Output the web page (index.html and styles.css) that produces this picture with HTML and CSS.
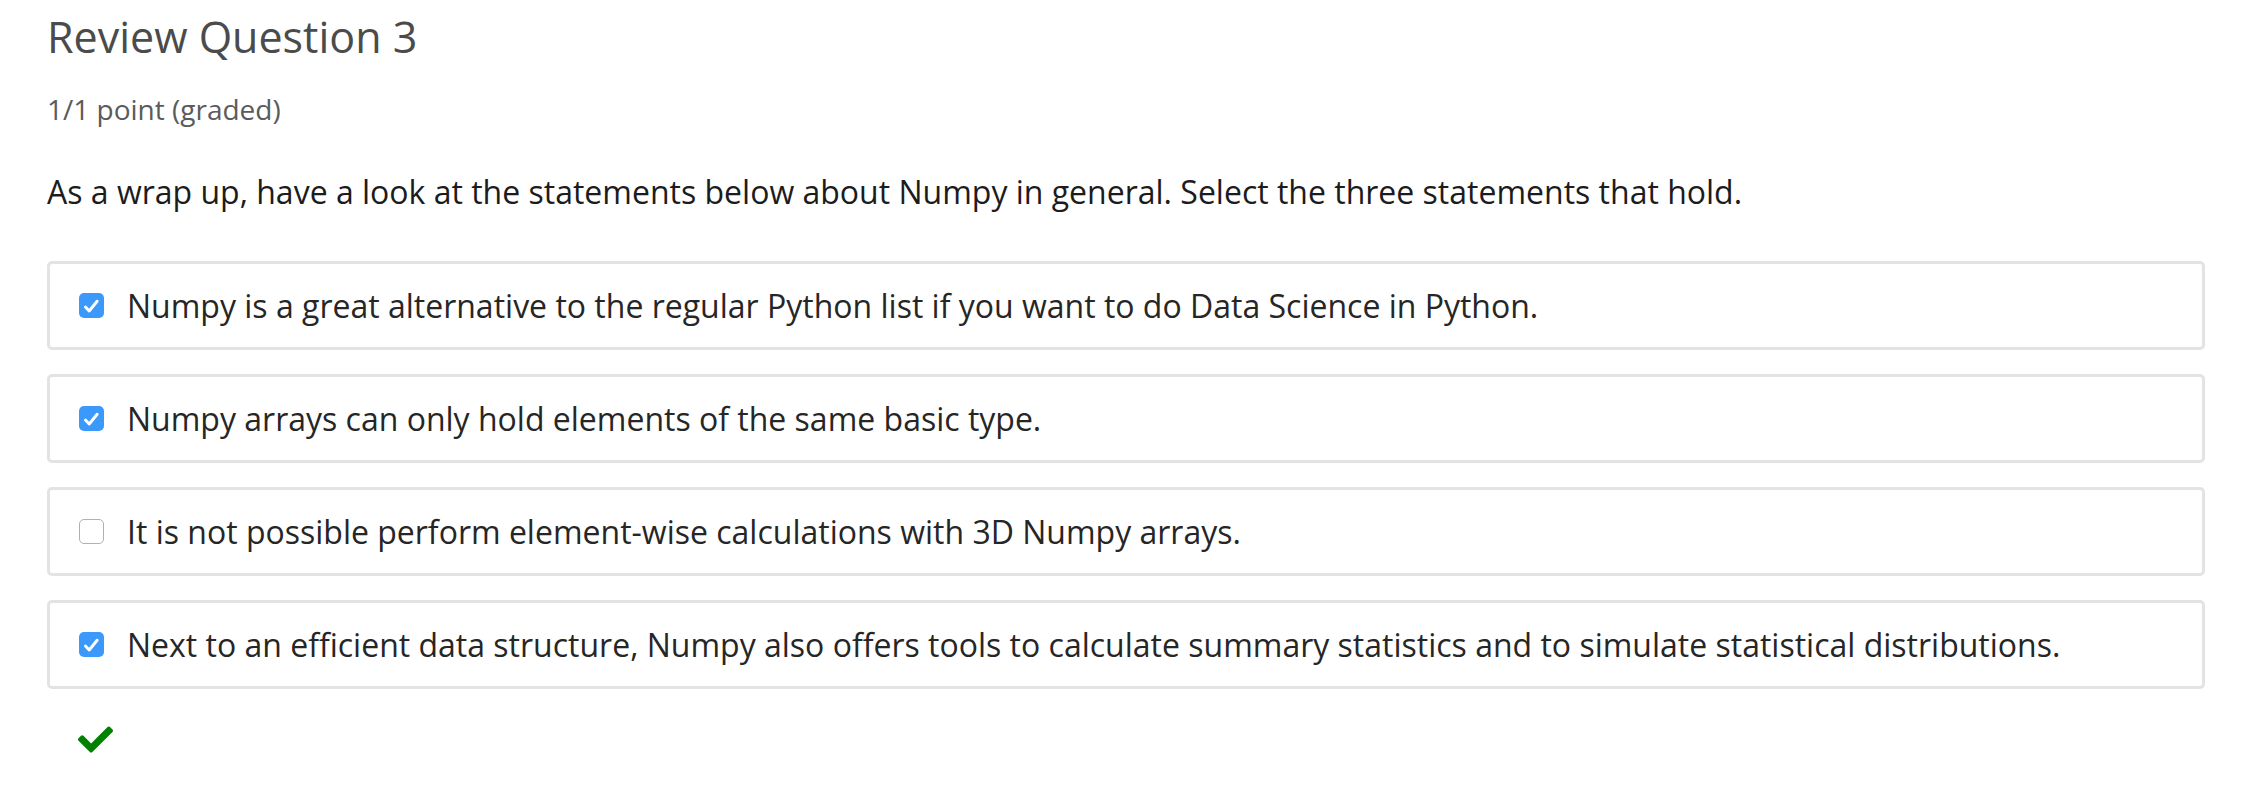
FILE: index.html
```html
<!DOCTYPE html>
<html lang="en">
<head>
<meta charset="utf-8">
<title>Review Question 3</title>
<link rel="stylesheet" href="styles.css">
</head>
<body>
<div class="problem">
  <h3 class="problem-header">Review Question 3</h3>
  <div class="problem-progress">1/1 point (graded)</div>
  <p class="prompt">As a wrap up, have a look at the statements below about Numpy in general. Select the three statements that hold.</p>
  <div class="choices">
    <label class="choice">
      <span class="box checked"><svg viewBox="0 0 24 24" width="25" height="25"><path d="M6.2 13.4l3.6 3.9 7.6-9.4" fill="none" stroke="#fff" stroke-width="2.8" stroke-linecap="round" stroke-linejoin="round"/></svg></span>
      <span class="choice-text">Numpy is a great alternative to the regular Python list if you want to do Data Science in Python.</span>
    </label>
    <label class="choice">
      <span class="box checked"><svg viewBox="0 0 24 24" width="25" height="25"><path d="M6.2 13.4l3.6 3.9 7.6-9.4" fill="none" stroke="#fff" stroke-width="2.8" stroke-linecap="round" stroke-linejoin="round"/></svg></span>
      <span class="choice-text">Numpy arrays can only hold elements of the same basic type.</span>
    </label>
    <label class="choice">
      <span class="box"></span>
      <span class="choice-text">It is not possible perform element-wise calculations with 3D Numpy arrays.</span>
    </label>
    <label class="choice">
      <span class="box checked"><svg viewBox="0 0 24 24" width="25" height="25"><path d="M6.2 13.4l3.6 3.9 7.6-9.4" fill="none" stroke="#fff" stroke-width="2.8" stroke-linecap="round" stroke-linejoin="round"/></svg></span>
      <span class="choice-text">Next to an efficient data structure, Numpy also offers tools to calculate summary statistics and to simulate statistical distributions.</span>
    </label>
  </div>
  <div class="status">
    <svg class="correct" viewBox="0 62 512 388" width="35" height="27"><path fill="#008100" d="M173.898 439.404l-166.4-166.4c-9.997-9.997-9.997-26.206 0-36.204l36.203-36.204c9.997-9.998 26.207-9.998 36.204 0L192 312.69 432.095 72.596c9.997-9.997 26.207-9.997 36.204 0l36.203 36.204c9.997 9.997 9.997 26.206 0 36.204l-294.4 294.401c-9.998 9.997-26.207 9.997-36.204-.001z"/></svg>
  </div>
</div>
</body>
</html>
```

FILE: styles.css
```css
html, body {
  margin: 0;
  padding: 0;
  background: #ffffff;
}

.problem {
  font-family: "Open Sans", "DejaVu Sans", sans-serif;
  padding: 11px 53px 0 47px;
}

.problem-header {
  margin: 0;
  font-size: 43px;
  line-height: 52px;
  font-weight: 400;
  color: #4b4b4b;
}

.problem-progress {
  margin-top: 27px;
  font-size: 28px;
  line-height: 38px;
  color: #5b5b5b;
}

.prompt {
  margin: 42px 0 0 0;
  font-size: 32px;
  line-height: 44px;
  color: #1c1c1c;
}

.choices {
  margin-top: 47px;
  display: flex;
  flex-direction: column;
  gap: 24px;
}

.choice {
  display: flex;
  align-items: center;
  gap: 23px;
  border: 3px solid #e3e3e3;
  border-radius: 5px;
  padding: 0 29px;
  height: 83px;
}

.box {
  flex: none;
  width: 25px;
  height: 25px;
  box-sizing: border-box;
  border-radius: 5px;
  border: 1.5px solid #b0b0b0;
  background: #fff;
  display: flex;
}

.box.checked {
  border: none;
  background: #3c99fc;
}

.choice-text {
  font-size: 32px;
  line-height: 44px;
  color: #262626;
}

.status {
  padding: 37px 0 0 31px;
}

.correct {
  display: block;
}
```
